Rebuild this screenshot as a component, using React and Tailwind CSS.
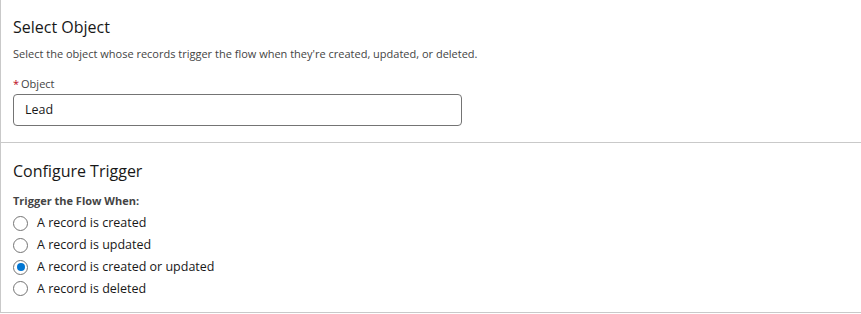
import React, { useState } from 'react';

const options = [
  'A record is created',
  'A record is updated',
  'A record is created or updated',
  'A record is deleted',
];

function Radio({ checked }) {
  return (
    <span className="w-[15px] h-[15px] rounded-full border border-[#747474] bg-white flex items-center justify-center shrink-0">
      {checked && <span className="w-[8px] h-[8px] rounded-full bg-[#0176d3]"></span>}
    </span>
  );
}

export default function App() {
  const [selected, setSelected] = useState(2);

  return (
    <div
      className="w-[861px] h-[314px] bg-white text-[#181818] overflow-hidden"
      style={{ fontFamily: '"Segoe UI", "Open Sans", Arial, sans-serif' }}
    >
      <div className="border-l border-b border-[#c9c9c9] h-[313px] flex flex-col">
        {/* Select Object */}
        <section className="pl-[12px] pt-[16px] pb-[16px] border-b border-[#c9c9c9]">
          <h2 className="text-[16px] leading-[22px] text-[#181818]">Select Object</h2>
          <p className="mt-[7px] text-[11px] leading-[18px] text-[#444]">
            Select the object whose records trigger the flow when they're created, updated, or deleted.
          </p>
          <label className="block mt-[13px] text-[11px] leading-[16px] text-[#444]">
            <span className="text-[#ba0517] mr-[2px]">*</span>Object
          </label>
          <div className="mt-[2px] w-[449px] h-[32px] border border-[#747474] rounded-[4px] flex items-center px-[11px] text-[12.5px] text-[#181818]">
            Lead
          </div>
        </section>

        {/* Configure Trigger */}
        <section className="pl-[12px] pt-[17px]">
          <h2 className="text-[16px] leading-[22px] text-[#181818]">Configure Trigger</h2>
          <div className="mt-[11px] text-[11px] leading-[16px] font-bold text-[#444]">Trigger the Flow When:</div>
          <div className="mt-[4px] flex flex-col">
            {options.map((opt, i) => (
              <button
                key={opt}
                onClick={() => setSelected(i)}
                className="flex items-center gap-[9px] h-[21.7px] text-left text-[12.5px] text-[#181818]"
              >
                <Radio checked={selected === i} />
                <span>{opt}</span>
              </button>
            ))}
          </div>
        </section>
      </div>
    </div>
  );
}
